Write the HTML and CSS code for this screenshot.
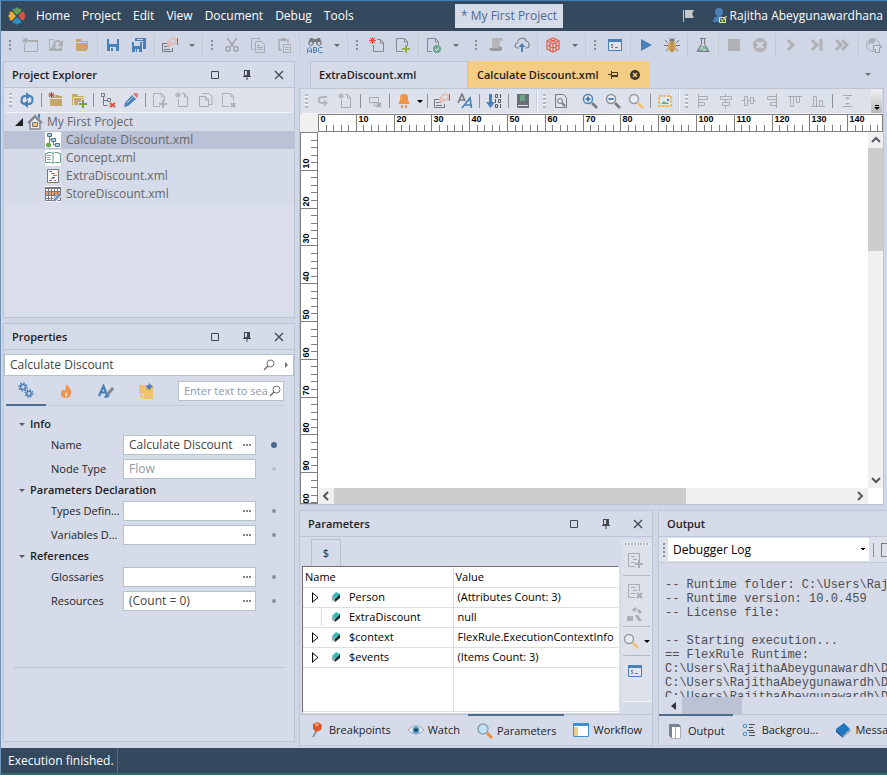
FILE: index.html
```html
<!DOCTYPE html>
<html lang="en">
<head>
    <meta charset="UTF-8">
    <meta name="viewport" content="width=device-width, initial-scale=1.0">
    <title>My First Project</title>
    <link rel="stylesheet" href="styles.css">
</head>
<body>

    <!-- icon set -->
    <svg class="sprite" aria-hidden="true">
        <symbol id="logo" viewBox="0 0 16 16"><path fill="#5fa054" d="M8 7L4.500 4 4 1.500 6.500 1.500 8 0l1.500 1.500 2.500 0-.5 2.500z"/><path fill="#e0503a" d="M9 8l3-3.500 2.500-.5 0 2.500L16 8l-1.500 1.500 0 2.500-2.500-.5z"/><path fill="#2f8fc4" d="M8 9l3.500 3 .5 2.500-2.500 0L8 16l-1.500-1.500-2.500 0 .5-2.500z"/><path fill="#eeb02c" d="M7 8l-3 3.500L1.500 12 1.500 9.500 0 8l1.500-1.500 0-2.500L4 4.500z"/></symbol>
        <symbol id="newwin" viewBox="0 0 16 16"><path fill="none" stroke="#a9abb0" d="M2.500 7v7.500h13v-11H7"/><path fill="#a9abb0" d="M7 3h9v2H7z"/><path stroke="#a9abb0" d="M3.500 0v7M0 3.500h7M1 1l5 5M6 1L1 6"/></symbol>
        <symbol id="openarrow" viewBox="0 0 16 16"><path fill="none" stroke="#adafb4" d="M1.500 13V2.500h4l1 2"/><path fill="#adafb4" d="M1 14l4-6h3l-1 3 2 1 2-1 3-2v5z"/><path fill="none" stroke="#adafb4" stroke-width="2" d="M6 9c0-6 5-6 7-3"/><path fill="#adafb4" d="M15 3v6H9z"/></symbol>
        <symbol id="folder" viewBox="0 0 16 16"><path fill="#c4a56b" d="M2 6h11v8H3l-1-1zM2 2h5l1 2h6v8h-1V5H2z"/></symbol>
        <symbol id="save" viewBox="0 0 16 16"><path fill="#4a80b8" d="M2 2h12v12H2z"/><path fill="#cfd6e6" d="M4 2h8v5H4zM5 10h6v4H5z"/><path fill="#4a80b8" d="M6 11h2v3H6z"/></symbol>
        <symbol id="saveall" viewBox="0 0 16 16"><path fill="#4a80b8" d="M1 5h10v10H1zM4 1h11v11h-3V4H4z"/><path fill="#cfd6e6" d="M3 5h6v4H3zM4 12h4v3H4zM6 2h6v1H6z"/><path fill="#4a80b8" d="M5 12h1v3H5z"/></symbol>
        <symbol id="form" viewBox="0 0 16 16"><path fill="none" stroke="#77797e" d="M.5 6.500h5M.5 6v8.500h10V11M2 9.500h5M2 12.500h6"/><path fill="none" stroke="#e9b9a8" stroke-width="1.500" d="M6 5l4-4 4 1v4l-5 2-3 1V5l4 1"/><path stroke="#77797e" d="M15.500 1v7"/></symbol>
        <symbol id="cut" viewBox="0 0 16 16"><g fill="none" stroke="#a3a6ac" stroke-width="1.500"><path d="M3 1l7 9M13 1l-7 9"/><circle cx="4" cy="12" r="2.200"/><circle cx="12" cy="12" r="2.200"/></g></symbol>
        <symbol id="copy" viewBox="0 0 16 16"><g fill="none" stroke="#a9abb0"><path d="M4.500 12.500h-3v-11h8v2M5.500 4.500h6l3 3v8h-9zM7 8.500h3M7 10.500h6M7 12.500h6"/></g></symbol>
        <symbol id="paste" viewBox="0 0 16 16"><path fill="none" stroke="#b3b5ba" stroke-width="2" d="M6 13H3V3h9v3"/><path fill="#a9abb0" d="M5 1h5v3H5z"/><path fill="none" stroke="#a9abb0" d="M7.500 7.500h7v8h-7zM9 10.500h4M9 12.500h4"/></symbol>
        <symbol id="abc" viewBox="0 0 16 16"><path fill="#77797e" d="M3 1h3v1h4V1h3l2 6H9V5H7v2H1z"/><circle cx="4" cy="6.500" r="2" fill="#cfd6e6" stroke="#77797e"/><circle cx="12" cy="6.500" r="2" fill="#cfd6e6" stroke="#77797e"/><path fill="none" stroke="#4a80b8" d="M.5 16v-4l2-1.500 2 1.500v4M.5 14h4M6.500 10.500v5h2.500q2-1.500 0-2.500 1.500-1 0-2.500zM7 13h2M15.500 10.500h-3l-1 1v3l1 1h3"/></symbol>
        <symbol id="newred" viewBox="0 0 16 16"><path fill="none" stroke="#85878c" d="M4.500 8v6.500h10v-9l-3-3H8M11.500 3v3h3"/><path stroke="#d8513a" d="M3.500 0v7M0 3.500h7M1 1l5 5M6 1L1 6"/></symbol>
        <symbol id="newgrey" viewBox="0 0 16 16"><path fill="none" stroke="#a9abb0" d="M3.500 7v7.500h9v-10l-3-3H7M9.500 2v3h3"/><path stroke="#a9abb0" d="M3 0v6M0 3h6M1 1l4 4M5 1L1 5"/></symbol>
        <symbol id="pageplus" viewBox="0 0 16 16"><path fill="none" stroke="#85878c" d="M8 14.500H1.500v-13h8l3 3V9M9.500 2v3h3"/><path stroke="#8eb540" stroke-width="2" d="M11 8v8M7 12h8"/></symbol>
        <symbol id="pageplusgrey" viewBox="0 0 16 16"><path fill="none" stroke="#aeb0b6" d="M8 14.500H1.500v-13h8l3 3V9M9.500 2v3h3"/><path stroke="#aeb0b6" stroke-width="2" d="M11 8v8M7 12h8"/></symbol>
        <symbol id="pagex" viewBox="0 0 16 16"><path fill="none" stroke="#aeb0b6" d="M8 14.500H1.500v-13h8l3 3V9M9.500 2v3h3"/><path stroke="#aeb0b6" stroke-width="2" d="M10 11l4 4M14 11l-4 4"/></symbol>
        <symbol id="pages" viewBox="0 0 16 16"><path fill="none" stroke="#a9abb0" d="M4 1.500h7l3 3v8h-3M1.500 4.500h6l3 3v7h-9zM7.500 5v3h3"/></symbol>
        <symbol id="pagecheck" viewBox="0 0 16 16"><path fill="none" stroke="#85878c" d="M6 14.500H1.500v-13h8l3 3V8M9.500 2v3h3"/><circle cx="11" cy="12" r="4" fill="#6ca58e"/><path fill="none" stroke="#fff" d="M9 12l1.500 1.500L13 10.500"/></symbol>
        <symbol id="scroll" viewBox="0 0 16 16"><path fill="#b5b6ba" d="M5 1h9l1 3h-3l-1 7H4V3z"/><path fill="#999ba0" d="M1 11h8l1 3H3zM11 9l3 1v3l-3 1H7l3-3z"/></symbol>
        <symbol id="cloud" viewBox="0 0 16 16"><path fill="none" stroke="#85878c" stroke-width="1.200" d="M5 11H3C0 10 1 6 3.500 6 4 0 11 0 12 4c4 1 4 6 1 7h-2"/><path fill="#4a80b8" d="M8 6l3.500 4H9v5H7v-5H4.500z"/></symbol>
        <symbol id="cube" viewBox="0 0 16 16"><path fill="none" stroke="#e0654c" stroke-width="1.300" d="M8 1l6 3v8l-6 3-6-3V4zM2 4l6 3 6-3M8 7v8M2 8l6 3 6-3M5 2.500l6 3v8M11 2.500l-6 3v8"/></symbol>
        <symbol id="console" viewBox="0 0 16 16"><path fill="#dfe4ee" stroke="#4a80b8" d="M1.500 2.500h13v11h-13z"/><path fill="#4a80b8" d="M1 2h14v3H1z"/><path fill="none" stroke="#77797e" d="M6 7.500H4.500L4 8l2 1.500-.5 1H4M8 10.500h3"/></symbol>
        <symbol id="play" viewBox="0 0 16 16"><path fill="#4a80b8" d="M3 2l11 6-11 6z"/></symbol>
        <symbol id="bug" viewBox="0 0 16 16"><path stroke="#77797e" d="M1 3l3 3M15 3l-3 3M0 8.500h16M2 14l3-3M14 14l-3-3M5 1l2 2M11 1L9 3"/><circle cx="8" cy="4" r="2.500" fill="#77797e"/><ellipse cx="8" cy="9.500" rx="4" ry="5.500" fill="#d0a458"/><path stroke="#8f7443" d="M8 5v10"/></symbol>
        <symbol id="flask" viewBox="0 0 16 16"><path fill="#84b3a0" d="M5 9h6l3 5H2z"/><path fill="none" stroke="#77797e" d="M5 1.500h6M6.500 2v5l-4.500 7.500h12L9.500 7V2"/><path stroke="#dfe4ee" d="M5 11h3M8 13h3"/></symbol>
        <symbol id="stop" viewBox="0 0 16 16"><path fill="#b0b1b5" d="M2 2h12v12H2z"/></symbol>
        <symbol id="cancel" viewBox="0 0 16 16"><circle cx="8" cy="8" r="7" fill="#b0b1b5"/><path stroke="#d6dbe9" stroke-width="2" d="M5 5l6 6M11 5l-6 6"/></symbol>
        <symbol id="step" viewBox="0 0 16 16"><path fill="none" stroke="#b0b1b5" stroke-width="3" d="M5 3l5 5-5 5"/></symbol>
        <symbol id="stepend" viewBox="0 0 16 16"><path fill="none" stroke="#b0b1b5" stroke-width="3" d="M3 3l5 5-5 5M12 2v12"/></symbol>
        <symbol id="fast" viewBox="0 0 16 16"><path fill="none" stroke="#b0b1b5" stroke-width="3" d="M1 3l5 5-5 5M7 3l5 5-5 5"/></symbol>
        <symbol id="globe" viewBox="0 0 16 16"><circle cx="7" cy="8" r="6.500" fill="none" stroke="#a9abb0"/><path fill="#b0b1b5" d="M3 3l4-2 3 2-3 4-2-1-3 2z"/><path fill="#d6dbe9" stroke="#999ba0" d="M7.500 8.500h8v2h-2v5h-4v-3h-2z"/></symbol>
        <symbol id="refresh" viewBox="0 0 16 16"><path fill="none" stroke="#4a80b8" stroke-width="2" d="M5 12C1 11 2 4 6 4h3M11 4c4 1 3 8-1 8H7"/><path fill="#4a80b8" d="M7 0v8l5-4zM9 8v8l-5-4z"/></symbol>
        <symbol id="foldernew" viewBox="0 0 16 16"><path fill="#c4a56b" d="M2 7h12v7H3l-1-1zM7 3h4v1h3v2H3v-1h4z"/><path stroke="#b3412e" d="M3.500 0v6M.5 3h6M1 1l5 4M6 1L1 5"/></symbol>
        <symbol id="folderplus" viewBox="0 0 16 16"><path fill="#c4a56b" d="M3 6h10v7H3zM1 2h5l1 2h6v1H2v8H1z"/><path stroke="#dde1ec" stroke-width="4" d="M12 7v9M7 12h9"/><path stroke="#7d9c3a" stroke-width="2" d="M12 8v8M8 12h8"/></symbol>
        <symbol id="treex" viewBox="0 0 16 16"><path fill="none" stroke="#77797e" d="M1.500 1.500h3v3h-3zM3.500 5v8.500h4M4 8.500h3M7.500 6.500h3v3h-3z"/><path stroke="#d8513a" stroke-width="2" d="M10 11l5 4M15 11l-5 4"/></symbol>
        <symbol id="pencil" viewBox="0 0 16 16"><path fill="#4a80b8" d="M9 3l4 4-8 7-4 1 1-4z"/><path fill="#dc7a86" d="M10 2l1-1h3l1 1v3l-1 1z"/><path stroke="#b9d0e6" d="M4 11l7-7"/></symbol>
        <symbol id="undo" viewBox="0 0 16 16"><path fill="none" stroke="#b3b5ba" stroke-width="2" d="M12 4H7c-5 1-4 6 0 6h3"/><path fill="#b3b5ba" d="M9 6l4 4-4 4z"/></symbol>
        <symbol id="boxx" viewBox="0 0 16 16"><path fill="none" stroke="#a9abb0" d="M2.500 4.500h9v5h-9zM7 10v3h3"/><path stroke="#a9abb0" stroke-width="2" d="M10 10l4 4M14 10l-4 4"/></symbol>
        <symbol id="led" viewBox="0 0 16 16"><path fill="#ec9448" d="M4 8V4q0-3 4-3t4 3v4h1v3H3V8zM5 12h2v3H5zM9 12h2v3H9z"/><path stroke="#f6c99c" d="M5.500 7V4"/></symbol>
        <symbol id="fonts" viewBox="0 0 16 16"><path fill="none" stroke="#77797e" stroke-width="1.700" d="M1 10L5 1l3 7M2.500 7H7"/><path fill="none" stroke="#4a80b8" stroke-width="1.700" d="M5 15l8-10 1.500 10M8 12h6"/></symbol>
        <symbol id="sort" viewBox="0 0 16 16"><path fill="#4a80b8" d="M3 1h3v8h3l-4.500 6L0 9h3z"/><path fill="none" stroke="#55585e" d="M9.500 1.500h2v3h-2zM14.500 1v4M9.500 6v4M12.500 6.500h2v3h-2zM9.500 11.500h2v3h-2zM14.500 11v4"/></symbol>
        <symbol id="book" viewBox="0 0 16 16"><path fill="#6b6e73" d="M2 1h12v14H3l-1-1z"/><path fill="#6ca58e" d="M5 2h5v7L7.500 7 5 9z"/><path stroke="#dde1ec" d="M3 12.500h10"/></symbol>
        <symbol id="preview" viewBox="0 0 16 16"><path fill="none" stroke="#77797e" d="M2.500 1.500h8l3 3v10h-11z"/><circle cx="7" cy="8" r="2.500" fill="none" stroke="#77797e"/><path stroke="#77797e" stroke-width="2" d="M9 10l3 3"/></symbol>
        <symbol id="zoomin" viewBox="0 0 16 16"><circle cx="6" cy="6" r="4.500" fill="#e8edf5" stroke="#4a80b8" stroke-width="1.500"/><path stroke="#77797e" stroke-width="2.500" d="M10 10l5 5"/><path stroke="#4a80b8" stroke-width="2" d="M3.500 6h5M6 3.500v5"/></symbol>
        <symbol id="zoomout" viewBox="0 0 16 16"><circle cx="6" cy="6" r="4.500" fill="#e8edf5" stroke="#8a9099" stroke-width="1.500"/><path stroke="#77797e" stroke-width="2.500" d="M10 10l5 5"/><path stroke="#4a80b8" stroke-width="2" d="M3.500 6h5"/></symbol>
        <symbol id="zoomfit" viewBox="0 0 16 16"><circle cx="6" cy="6" r="4.500" fill="#e8ebf2" stroke="#999ba0" stroke-width="1.500"/><path stroke="#efc272" stroke-width="3" d="M10 10l5 5"/></symbol>
        <symbol id="image" viewBox="0 0 16 16"><path fill="#dfe9ee" stroke="#efbb62" stroke-width="2" stroke-dasharray="3 1" d="M2 3h12v10H2z"/><path fill="#6ca58e" d="M4 11l3-3 2 2 1-1 2 2z"/><path fill="#4a80b8" d="M10 6h2v2h-2z"/></symbol>
        <symbol id="alignl" viewBox="0 0 16 16"><path fill="none" stroke="#a9abb0" d="M3.500 1v14M4 3.500h8.500v3H4M4 9.500h5.500v3H4"/></symbol>
        <symbol id="alignc" viewBox="0 0 16 16"><path fill="none" stroke="#a9abb0" d="M7.500 1v2M7.500 7v3M7.500 13v3M2.500 3.500h11v3h-11zM4.500 9.500h7v3h-7z"/></symbol>
        <symbol id="alignm" viewBox="0 0 16 16"><path fill="none" stroke="#a9abb0" d="M1 7.500h2M7 7.500h3M13 7.500h2M3.500 3.500h3v9h-3zM9.500 4.500h3v6h-3z"/></symbol>
        <symbol id="alignr" viewBox="0 0 16 16"><path fill="none" stroke="#a9abb0" d="M12.500 1v14M12 3.500H3.500v3H12M12 9.500H6.500v3H12"/></symbol>
        <symbol id="alignt" viewBox="0 0 16 16"><path fill="none" stroke="#a9abb0" d="M1 3.500h14M3.500 4v9.500h3V4M9.500 4v5.500h3V4"/></symbol>
        <symbol id="alignb" viewBox="0 0 16 16"><path fill="none" stroke="#a9abb0" d="M1 13.500h14M3.500 13V3.500h3V13M9.500 13V7.500h3V13"/></symbol>
        <symbol id="spacev" viewBox="0 0 16 16"><path fill="none" stroke="#a9abb0" d="M4 2.500h9M4 13.500h9"/><path fill="#a9abb0" d="M6 6h5L8.500 4zM6 10h5l-2.500 2z"/></symbol>
        <symbol id="home" viewBox="0 0 16 16"><path fill="#4a80b8" d="M11 0h2v5l-2-2z"/><path fill="#e6e9f0" stroke="#85878c" stroke-width="1.500" d="M3 8v7h10V8L8 3z"/><path fill="none" stroke="#85878c" stroke-width="2" d="M1 9l7-7 7 7"/><path fill="#f2c268" stroke="#77797e" d="M5.500 8.500h5v4h-5z"/></symbol>
        <symbol id="flow" viewBox="0 0 16 16"><path fill="#fff" d="M0 0h16v16H0z"/><path fill="none" stroke="#77797e" d="M4.500 3v10M5 7.500h4M8.500 9v4h3"/><path fill="#9fd2ee" stroke="#5d7488" d="M2.500 1.500h4v3h-4zM6.500 6.500h4v3h-4zM10.500 11.500h4v3h-4z"/><circle cx="3.500" cy="13" r="2.500" fill="#6aa84f"/></symbol>
        <symbol id="concept" viewBox="0 0 16 16"><path fill="#fff" d="M0 0h16v16H0z"/><path fill="none" stroke="#6ca58e" d="M.5 3.500h2v-1h4l1.500 1 1.500-1h4v1h2v9h-6l-1.500 1-1.500-1h-6zM8 3v10"/><path stroke="#9a9ca0" d="M2 5.500h4M2 7.500h3M2 9.500h4"/></symbol>
        <symbol id="rule" viewBox="0 0 16 16"><path fill="#fff" stroke="#77797e" d="M2.500 1.500h11v13h-11z"/><path stroke="#4a6fd0" d="M4 3.500h3M7 9.500h3M4 12.500h3"/><path stroke="#e06a5a" d="M6 5.500h4M8 7.500h4M6 10.500h3M9 12.500h2"/></symbol>
        <symbol id="table" viewBox="0 0 16 16"><path fill="#fff" d="M0 0h16v16H0z"/><path fill="#77797e" d="M0 1h16v2H0z"/><path fill="#ec9b62" d="M0 6h16v3H0z"/><path fill="none" stroke="#77797e" d="M.5 1v13.500h15V1M3.500 3v12M6.500 3v12M9.500 3v12M12.500 3v12M0 5.500h16M0 9.500h16M0 12.500h16"/><path stroke="#fff" stroke-width="4" d="M9 15l6-6"/><path stroke="#5f86b5" stroke-width="2.500" d="M9 15l6-7"/></symbol>
        <symbol id="gears" viewBox="0 0 16 16"><g fill="none" stroke="#4a80b8"><circle cx="5" cy="5" r="2.500" stroke-width="1.500"/><circle cx="5" cy="5" r="4" stroke-width="1.500" stroke-dasharray="1.600 1.500"/><circle cx="11" cy="11.500" r="2.200" stroke-width="1.500"/><circle cx="11" cy="11.500" r="3.700" stroke-width="1.500" stroke-dasharray="1.500 1.400"/></g></symbol>
        <symbol id="flame" viewBox="0 0 16 16"><path fill="#ee9450" d="M8 1c4 4 6 6 5 10-1 3-3 4-5 4s-5-1-5-4c0-2 1-4 2-5l1 2c2-2 2-4 2-7z"/><path fill="#f7d9c3" d="M8 9c2 2 2 4 0 5-2-1-1-3 0-5z"/></symbol>
        <symbol id="style" viewBox="0 0 16 16"><path fill="none" stroke="#4a80b8" stroke-width="2.200" d="M1 13L5.500 3 9 12M3 9.500h5"/><path stroke="#85878c" stroke-width="3" d="M10 11l5-6"/><path fill="#4a80b8" d="M6 15q1-4 4-4l2 2q-2 2-6 2z"/></symbol>
        <symbol id="note" viewBox="0 0 16 16"><path fill="#eec272" d="M1 2h14v14H6v-5H1zM1 12h4v4z"/><path fill="#4a80b8" d="M11 0l4 4-2 .5-1.500 3-1.500-2L7 8l2.500-3-2-1.500 3-1.500z"/></symbol>
        <symbol id="search" viewBox="0 0 16 16"><circle cx="9.500" cy="6.500" r="3.500" fill="none" stroke="#6a6c70"/><path stroke="#6a6c70" stroke-width="1.500" d="M7 9l-4 4"/></symbol>
        <symbol id="max" viewBox="0 0 16 16"><path fill="none" stroke="#44474d" d="M4.500 4.500h7v7h-7z"/></symbol>
        <symbol id="pin" viewBox="0 0 16 16"><path fill="#44474d" d="M5 3h6v6H5zM4 9h8v1H4zM7.500 10h1v3h-1z"/><path fill="#d6dbe9" d="M6 4h2v4H6z"/></symbol>
        <symbol id="close" viewBox="0 0 16 16"><path stroke="#44474d" stroke-width="1.300" d="M4 4l8 8M12 4l-8 8"/></symbol>
        <symbol id="pinside" viewBox="0 0 16 16"><path fill="none" stroke="#3f3727" d="M3 7.500h3M6.500 4v8M7 5.500h5.500v4H7"/><path fill="#3f3727" d="M7 8h6v2H7z"/></symbol>
        <symbol id="closetab" viewBox="0 0 16 16"><circle cx="8" cy="8" r="5" fill="#3f3727"/><path stroke="#f5cc84" stroke-width="1.500" d="M6 6l4 4M10 6l-4 4"/></symbol>
        <symbol id="flag" viewBox="0 0 16 16"><path fill="#c3c7cd" d="M2 2h1v12H2zM4 2h9l-2 4 2 4H4z"/></symbol>
        <symbol id="user" viewBox="0 0 16 16"><circle cx="7" cy="4" r="4" fill="#4a80b8"/><path fill="#4a80b8" d="M1 14q0-6 6-6t6 6z"/><path fill="#34495e" stroke="#dfe8c8" d="M7.500 9.500h6v5h-6z"/><path fill="none" stroke="#b8cf3a" stroke-width="1.500" d="M8.500 11l2 2 4-5"/></symbol>
        <symbol id="gem" viewBox="0 0 12 12"><path fill="#35bdb5" d="M2 5l4-4 4 2-5 5z"/><path fill="#8fa3a8" d="M2 5l3 3v3L2 9z"/><path fill="#1b2b2d" d="M5 8l5-5v4l-5 4z"/></symbol>
        <symbol id="bpin" viewBox="0 0 16 16"><path stroke="#77797e" stroke-width="1.500" d="M8 8l-4 7"/><path fill="#de5427" d="M4 2l5-2 4 3-1 5-5 2-3-3z"/><path fill="#f6a37c" d="M6 2l3-1 1 2-3 2z"/></symbol>
        <symbol id="eye" viewBox="0 0 16 16"><path fill="#eef2f6" stroke="#9aa3ac" d="M0 8q8-9 16 0-8 8-16 0z"/><circle cx="8" cy="8" r="3.500" fill="#4e9cc9"/><circle cx="8" cy="8" r="1.700" fill="#1c3a50"/></symbol>
        <symbol id="lens" viewBox="0 0 16 16"><circle cx="6" cy="6" r="5" fill="#bfe2f5" stroke="#8fa0b0" stroke-width="1.500"/><path stroke="#e79043" stroke-width="3" d="M10 10l5 5"/></symbol>
        <symbol id="wf" viewBox="0 0 16 16"><path fill="#fff" stroke="#3b8fd4" d="M.5 1.500h15v13H.5z"/><path fill="#3b8fd4" d="M0 1h16v3H0z"/><path fill="#e8cf88" d="M1 5h4v9H1z"/></symbol>
        <symbol id="outlog" viewBox="0 0 16 16"><path fill="#fff" stroke="#a9b1bd" d="M3.500 3.500h9v12h-9z"/><path fill="#7b8391" d="M1 1h10l2 3H4v11l-3-2z"/><path stroke="#e79a8a" d="M7.500 4v11"/></symbol>
        <symbol id="bglist" viewBox="0 0 16 16"><circle cx="3" cy="4" r="1.800" fill="none" stroke="#3b8fd4"/><circle cx="3" cy="12" r="1.800" fill="none" stroke="#3b8fd4"/><path stroke="#4a4d52" d="M7 2.500h6M7 5.500h4M5 8.500h7M7 10.500h6M7 13.500h6"/></symbol>
        <symbol id="msg" viewBox="0 0 16 16"><path fill="#1f78c2" d="M1 7l8-6 6 6-7 7z"/><path fill="#155a97" d="M1 7l7 7v2L1 10z"/><path fill="#e8eef4" stroke="#7f93a6" d="M8 14l7-6v1l-7 6z"/></symbol>
        <symbol id="lineplus" viewBox="0 0 16 16"><path fill="none" stroke="#a9abb0" d="M8 14.500H1.500v-13h11V8M4 4.500h4M6 7.500h4M4 10.500h4"/><path stroke="#a9abb0" stroke-width="2" d="M12 8v8M8 12h8"/></symbol>
        <symbol id="linex" viewBox="0 0 16 16"><path fill="none" stroke="#a9abb0" d="M8 14.500H1.500v-13h11V8M4 4.500h4M6 7.500h4M4 10.500h4"/><path stroke="#a9abb0" stroke-width="2" d="M10 10l5 5M15 10l-5 5"/></symbol>
        <symbol id="erase" viewBox="0 0 16 16"><path fill="#adafb4" d="M0 10h6v5H0zM8 9l3 6h4l-4-6zM5 4l3-3 2 2-3 3zM10 5l2-2 3 3-2 2z"/></symbol>
    </svg>

    <header class="titlebar">
        <nav class="menu">
            <svg class="logo"><use href="#logo"/></svg>
            <a href="#">Home</a>
            <a href="#">Project</a>
            <a href="#">Edit</a>
            <a href="#">View</a>
            <a href="#">Document</a>
            <a href="#">Debug</a>
            <a href="#">Tools</a>
        </nav>
        <div class="doc-name">* My First Project</div>
        <div class="account">
            <svg class="icon"><use href="#flag"/></svg>
            <svg class="icon user"><use href="#user"/></svg>
            <span>Rajitha Abeygunawardhana</span>
        </div>
    </header>

    <div class="toolbar main">
        <i class="grip"></i>
        <button aria-label="New"><svg class="icon"><use href="#newwin"/></svg></button>
        <button aria-label="Import"><svg class="icon"><use href="#openarrow"/></svg></button>
        <button aria-label="Open"><svg class="icon"><use href="#folder"/></svg></button>
        <i class="sep"></i>
        <button aria-label="Save"><svg class="icon"><use href="#save"/></svg></button>
        <button aria-label="Save all"><svg class="icon"><use href="#saveall"/></svg></button>
        <i class="sep"></i>
        <button aria-label="Form"><svg class="icon"><use href="#form"/></svg></button>
        <button class="drop" aria-label="More forms"></button>
        <i class="sep"></i>
        <i class="grip"></i>
        <button aria-label="Cut"><svg class="icon"><use href="#cut"/></svg></button>
        <button aria-label="Copy"><svg class="icon"><use href="#copy"/></svg></button>
        <button aria-label="Paste"><svg class="icon"><use href="#paste"/></svg></button>
        <i class="sep"></i>
        <button aria-label="Find"><svg class="icon"><use href="#abc"/></svg></button>
        <button class="drop" aria-label="More find"></button>
        <i class="sep"></i>
        <i class="grip"></i>
        <button aria-label="New file"><svg class="icon"><use href="#newred"/></svg></button>
        <button aria-label="Add file"><svg class="icon"><use href="#pageplus"/></svg></button>
        <i class="sep"></i>
        <button aria-label="Validate"><svg class="icon"><use href="#pagecheck"/></svg></button>
        <button class="drop" aria-label="More validate"></button>
        <i class="sep blank"></i>
        <i class="grip"></i>
        <button aria-label="Script"><svg class="icon"><use href="#scroll"/></svg></button>
        <button aria-label="Publish"><svg class="icon"><use href="#cloud"/></svg></button>
        <i class="sep"></i>
        <button aria-label="Package"><svg class="icon"><use href="#cube"/></svg></button>
        <button class="drop" aria-label="More package"></button>
        <i class="sep"></i>
        <i class="grip"></i>
        <button aria-label="Console"><svg class="icon"><use href="#console"/></svg></button>
        <i class="sep"></i>
        <button aria-label="Run"><svg class="icon"><use href="#play"/></svg></button>
        <button aria-label="Debug"><svg class="icon"><use href="#bug"/></svg></button>
        <i class="sep"></i>
        <button aria-label="Test"><svg class="icon"><use href="#flask"/></svg></button>
        <i class="sep"></i>
        <button aria-label="Stop"><svg class="icon"><use href="#stop"/></svg></button>
        <button aria-label="Cancel"><svg class="icon"><use href="#cancel"/></svg></button>
        <i class="sep"></i>
        <button aria-label="Step"><svg class="icon"><use href="#step"/></svg></button>
        <button aria-label="Step to end"><svg class="icon"><use href="#stepend"/></svg></button>
        <button aria-label="Continue"><svg class="icon"><use href="#fast"/></svg></button>
        <i class="sep"></i>
        <button aria-label="Web"><svg class="icon"><use href="#globe"/></svg></button>
    </div>

    <main class="workspace">
        <div class="left">
            <section class="panel explorer">
                <div class="panel-head">
                    <h2>Project Explorer</h2>
                    <button aria-label="Maximize"><svg class="icon"><use href="#max"/></svg></button>
                    <button aria-label="Pin"><svg class="icon"><use href="#pin"/></svg></button>
                    <button aria-label="Close"><svg class="icon"><use href="#close"/></svg></button>
                </div>
                <div class="toolbar small">
                    <i class="grip"></i>
                    <button aria-label="Refresh"><svg class="icon"><use href="#refresh"/></svg></button>
                    <i class="sep"></i>
                    <button aria-label="New folder"><svg class="icon"><use href="#foldernew"/></svg></button>
                    <button aria-label="Add folder"><svg class="icon"><use href="#folderplus"/></svg></button>
                    <i class="sep"></i>
                    <button aria-label="Remove"><svg class="icon"><use href="#treex"/></svg></button>
                    <button aria-label="Rename"><svg class="icon"><use href="#pencil"/></svg></button>
                    <i class="sep"></i>
                    <button aria-label="Add page"><svg class="icon"><use href="#pageplusgrey"/></svg></button>
                    <button aria-label="New page"><svg class="icon"><use href="#newgrey"/></svg></button>
                    <button aria-label="Copy page"><svg class="icon"><use href="#pages"/></svg></button>
                    <button aria-label="Delete page"><svg class="icon"><use href="#pagex"/></svg></button>
                </div>
                <ul class="tree">
                    <li class="root"><i class="caret"></i><svg class="icon"><use href="#home"/></svg>My First Project</li>
                    <li class="selected"><svg class="icon"><use href="#flow"/></svg>Calculate Discount.xml</li>
                    <li><svg class="icon"><use href="#concept"/></svg>Concept.xml</li>
                    <li><svg class="icon"><use href="#rule"/></svg>ExtraDiscount.xml</li>
                    <li><svg class="icon"><use href="#table"/></svg>StoreDiscount.xml</li>
                </ul>
            </section>

            <section class="panel properties">
                <div class="panel-head">
                    <h2>Properties</h2>
                    <button aria-label="Maximize"><svg class="icon"><use href="#max"/></svg></button>
                    <button aria-label="Pin"><svg class="icon"><use href="#pin"/></svg></button>
                    <button aria-label="Close"><svg class="icon"><use href="#close"/></svg></button>
                </div>
                <div class="object-box">
                    <input type="text" value="Calculate Discount" aria-label="Selected object">
                    <svg class="icon"><use href="#search"/></svg>
                    <i class="right-arrow"></i>
                </div>
                <div class="prop-tabs">
                    <button class="active" aria-label="General"><svg class="icon"><use href="#gears"/></svg></button>
                    <button aria-label="Events"><svg class="icon"><use href="#flame"/></svg></button>
                    <button aria-label="Style"><svg class="icon"><use href="#style"/></svg></button>
                    <button aria-label="Notes"><svg class="icon"><use href="#note"/></svg></button>
                    <div class="prop-search">
                        <input type="text" placeholder="Enter text to search" aria-label="Search properties">
                        <svg class="icon"><use href="#search"/></svg>
                    </div>
                </div>
                <div class="prop-list">
                    <h3>Info</h3>
                    <div class="prop set">
                        <label for="name">Name</label>
                        <div class="field"><input type="text" id="name" value="Calculate Discount"><button aria-label="Edit name"></button></div>
                    </div>
                    <div class="prop readonly">
                        <label for="nodeType">Node Type</label>
                        <div class="field"><input type="text" id="nodeType" value="Flow" readonly></div>
                    </div>
                    <h3>Parameters Declaration</h3>
                    <div class="prop">
                        <label for="types">Types Defin...</label>
                        <div class="field"><input type="text" id="types"><button aria-label="Edit types"></button></div>
                    </div>
                    <div class="prop">
                        <label for="variables">Variables D...</label>
                        <div class="field"><input type="text" id="variables"><button aria-label="Edit variables"></button></div>
                    </div>
                    <h3>References</h3>
                    <div class="prop">
                        <label for="glossaries">Glossaries</label>
                        <div class="field"><input type="text" id="glossaries"><button aria-label="Edit glossaries"></button></div>
                    </div>
                    <div class="prop">
                        <label for="resources">Resources</label>
                        <div class="field"><input type="text" id="resources" value="(Count = 0)"><button aria-label="Edit resources"></button></div>
                    </div>
                </div>
                <div class="prop-help"></div>
            </section>
        </div>

        <div class="right">
            <section class="editor">
                <div class="doc-tabs">
                    <button class="doc-tab">ExtraDiscount.xml</button>
                    <button class="doc-tab active">Calculate Discount.xml
                        <svg class="icon"><use href="#pinside"/></svg>
                        <svg class="icon"><use href="#closetab"/></svg>
                    </button>
                    <button class="drop" aria-label="Open documents"></button>
                </div>
                <div class="canvas-frame">
                    <div class="toolbar small">
                        <i class="grip"></i>
                        <button aria-label="Undo"><svg class="icon"><use href="#undo"/></svg></button>
                        <button aria-label="New item"><svg class="icon"><use href="#newgrey"/></svg></button>
                        <i class="sep"></i>
                        <button aria-label="Delete item"><svg class="icon"><use href="#boxx"/></svg></button>
                        <i class="sep"></i>
                        <button aria-label="Breakpoint"><svg class="icon"><use href="#led"/></svg></button>
                        <button class="drop" aria-label="Breakpoint options"></button>
                        <i class="sep"></i>
                        <button aria-label="Form"><svg class="icon"><use href="#form"/></svg></button>
                        <button aria-label="Fonts"><svg class="icon"><use href="#fonts"/></svg></button>
                        <i class="sep"></i>
                        <button aria-label="Sort"><svg class="icon"><use href="#sort"/></svg></button>
                        <i class="sep"></i>
                        <button aria-label="Bookmark"><svg class="icon"><use href="#book"/></svg></button>
                        <i class="group-end"></i>
                        <i class="grip"></i>
                        <button aria-label="Preview"><svg class="icon"><use href="#preview"/></svg></button>
                        <i class="sep blank"></i>
                        <button aria-label="Zoom in"><svg class="icon"><use href="#zoomin"/></svg></button>
                        <button aria-label="Zoom out"><svg class="icon"><use href="#zoomout"/></svg></button>
                        <button aria-label="Zoom to fit"><svg class="icon"><use href="#zoomfit"/></svg></button>
                        <i class="sep"></i>
                        <button aria-label="Image"><svg class="icon"><use href="#image"/></svg></button>
                        <i class="group-end"></i>
                        <i class="grip"></i>
                        <button aria-label="Align left"><svg class="icon"><use href="#alignl"/></svg></button>
                        <button aria-label="Align center"><svg class="icon"><use href="#alignc"/></svg></button>
                        <button aria-label="Align middle"><svg class="icon"><use href="#alignm"/></svg></button>
                        <button aria-label="Align right"><svg class="icon"><use href="#alignr"/></svg></button>
                        <button aria-label="Align top"><svg class="icon"><use href="#alignt"/></svg></button>
                        <button aria-label="Align bottom"><svg class="icon"><use href="#alignb"/></svg></button>
                        <i class="sep"></i>
                        <button aria-label="Space vertically"><svg class="icon"><use href="#spacev"/></svg></button>
                        <button class="overflow" aria-label="Toolbar options"></button>
                    </div>
                    <div class="canvas">
                        <div class="corner"></div>
                        <svg class="ruler-x" id="rulerX"></svg>
                        <svg class="ruler-y" id="rulerY"></svg>
                        <div class="sheet"></div>
                        <div class="vscroll">
                            <svg class="arrow" viewBox="0 0 16 16"><path d="M4 10l4-4 4 4"/></svg>
                            <i class="thumb"></i>
                            <svg class="arrow" viewBox="0 0 16 16"><path d="M4 6l4 4 4-4"/></svg>
                        </div>
                        <div class="hscroll">
                            <svg class="arrow" viewBox="0 0 16 16"><path d="M10 4L6 8l4 4"/></svg>
                            <i class="thumb"></i>
                            <svg class="arrow" viewBox="0 0 16 16"><path d="M6 4l4 4-4 4"/></svg>
                        </div>
                    </div>
                </div>
            </section>

            <div class="bottom">
                <section class="panel parameters">
                    <div class="panel-head">
                        <h2>Parameters</h2>
                        <button aria-label="Maximize"><svg class="icon"><use href="#max"/></svg></button>
                        <button aria-label="Pin"><svg class="icon"><use href="#pin"/></svg></button>
                        <button aria-label="Close"><svg class="icon"><use href="#close"/></svg></button>
                    </div>
                    <div class="param-body">
                        <div class="param-left">
                            <button class="dollar">$</button>
                            <div class="grid-box">
                                <table>
                                    <thead>
                                        <tr><th>Name</th><th>Value</th></tr>
                                    </thead>
                                    <tbody>
                                        <tr><td><div class="cell"><i class="expand"></i><svg class="gem"><use href="#gem"/></svg>Person</div></td><td>(Attributes Count: 3)</td></tr>
                                        <tr><td><div class="cell"><i class="expand none"></i><svg class="gem"><use href="#gem"/></svg>ExtraDiscount</div></td><td>null</td></tr>
                                        <tr><td><div class="cell"><i class="expand"></i><svg class="gem"><use href="#gem"/></svg>$context</div></td><td>FlexRule.ExecutionContextInfo</td></tr>
                                        <tr><td><div class="cell"><i class="expand"></i><svg class="gem"><use href="#gem"/></svg>$events</div></td><td>(Items Count: 3)</td></tr>
                                        <tr class="filler"><td></td><td></td></tr>
                                    </tbody>
                                </table>
                            </div>
                        </div>
                        <div class="side-tools">
                            <i class="grip-h"></i>
                            <button aria-label="Add"><svg class="icon"><use href="#lineplus"/></svg></button>
                            <hr>
                            <button aria-label="Remove"><svg class="icon"><use href="#linex"/></svg></button>
                            <button class="tight" aria-label="Clear"><svg class="icon"><use href="#erase"/></svg></button>
                            <hr>
                            <button class="with-drop" aria-label="Search"><svg class="icon"><use href="#zoomfit"/></svg></button>
                            <hr>
                            <button aria-label="Console"><svg class="icon"><use href="#console"/></svg></button>
                        </div>
                    </div>
                    <div class="dock-tabs">
                        <button><svg class="icon"><use href="#bpin"/></svg>Breakpoints</button>
                        <button><svg class="icon"><use href="#eye"/></svg>Watch</button>
                        <button class="active"><svg class="icon"><use href="#lens"/></svg>Parameters</button>
                        <button><svg class="icon"><use href="#wf"/></svg>Workflow</button>
                    </div>
                </section>

                <section class="panel output">
                    <div class="panel-head">
                        <h2>Output</h2>
                    </div>
                    <div class="output-tools">
                        <i class="grip"></i>
                        <select aria-label="Log source"><option>Debugger Log</option></select>
                        <i class="sep"></i>
                        <button aria-label="Clear log"></button>
                    </div>
                    <pre class="log">

-- Runtime folder: C:\Users\RajithaAbeygunawardh
-- Runtime version: 10.0.459
-- License file:

-- Starting execution...
== FlexRule Runtime:
C:\Users\RajithaAbeygunawardh\Documents
C:\Users\RajithaAbeygunawardh\Documents
C:\Users\RajithaAbeygunawardh\Documents</pre>
                    <div class="log-scroll"><i class="left-arrow"></i><i class="thumb"></i></div>
                    <div class="dock-tabs">
                        <button class="active"><svg class="icon"><use href="#outlog"/></svg>Output</button>
                        <button><svg class="icon"><use href="#bglist"/></svg>Backgrou...</button>
                        <button><svg class="icon"><use href="#msg"/></svg>Messages</button>
                    </div>
                </section>
            </div>
        </div>
    </main>

    <footer class="statusbar"><span>Execution finished.</span></footer>

    <script src="script.js"></script>
</body>
</html>
```

FILE: styles.css
```css
* {
    box-sizing: border-box;
}
body {
    margin: 0;
    height: 100vh;
    display: flex;
    flex-direction: column;
    overflow: hidden;
    border-top: 1px solid #3d7fb8;
    border-left: 1px solid #6f93b5;
    border-bottom: 2px solid #3a666d;
    background-color: #cfd6e6;
    font-family: "Open Sans", "Noto Sans", sans-serif;
    font-size: 12px;
    line-height: 18px;
    color: #1e1e1e;
}
button, input, select {
    font: inherit;
    color: inherit;
    margin: 0;
    padding: 0;
    border: none;
    background: none;
}
h2, h3, ul, pre, hr {
    margin: 0;
    padding: 0;
}
.sprite {
    position: absolute;
    width: 0;
    height: 0;
}
.icon {
    width: 16px;
    height: 16px;
    flex: none;
    display: block;
}

/* title bar */
.titlebar {
    flex: none;
    height: 30px;
    display: grid;
    grid-template-columns: 454px auto 1fr;
    align-items: center;
    background-color: #34495e;
    color: #fff;
}
.menu {
    display: flex;
    align-items: center;
    gap: 12px;
    padding-left: 7px;
}
.menu a {
    color: #fff;
    text-decoration: none;
}
.logo {
    width: 18px;
    height: 18px;
    margin-right: -2px;
}
.doc-name {
    padding: 3px 6px;
    background-color: #d6dbe9;
    color: #4f6990;
}
.account {
    display: flex;
    align-items: center;
    justify-content: flex-end;
    padding-right: 4px;
    white-space: nowrap;
}
.account .user {
    margin: 0 2px 0 15px;
}

/* toolbars */
.toolbar {
    flex: none;
    display: flex;
    align-items: center;
    overflow: hidden;
}
.toolbar button {
    flex: none;
    display: flex;
    justify-content: center;
    align-items: center;
}
.toolbar.main {
    height: 28px;
    margin-bottom: 2px;
    padding-left: 2px;
}
.main button {
    width: 26px;
    height: 24px;
}
.main .drop {
    width: 17px;
}
.drop::after {
    content: "";
    border: 3px solid transparent;
    border-top-color: #6a6c70;
    border-bottom: none;
}
.grip {
    flex: none;
    width: 14px;
    height: 10px;
    background: repeating-linear-gradient(#8a8d94 0 2px, transparent 2px 4px) center / 2px 100% no-repeat;
}
.sep {
    flex: none;
    width: 5px;
    height: 24px;
    background: linear-gradient(#c0cbd4, #c0cbd4) center / 1px 100% no-repeat;
}
.sep.blank {
    background: none;
}
.toolbar.small {
    height: 25px;
    margin: 0 1px;
    border-bottom: 1px solid #f2f4f8;
    border-radius: 3px;
    background-color: #dde1ec;
}
.small button {
    width: 23px;
    height: 24px;
}
.small .drop {
    width: 9px;
}
.small .drop::after {
    border-top-color: #000;
}
.small .grip {
    width: 10px;
    height: 14px;
    background: repeating-linear-gradient(#b4b8c2 0 2px, #fff 2px 3px, transparent 3px 4px) center / 3px 100% no-repeat;
}
.small .sep {
    width: 6px;
    height: 14px;
    background: linear-gradient(#8d9096, #8d9096) center / 1px 100% no-repeat;
}
.small .sep.blank {
    background: none;
}
.group-end {
    flex: none;
    width: 2px;
    height: 22px;
    margin: 0 1px 0 2px;
    border-right: 1px solid #f5f6fa;
    background-color: #c9cedb;
}
.small .overflow {
    width: 11px;
    margin-left: auto;
    align-items: flex-end;
    padding-bottom: 3px;
    background: linear-gradient(#f2f2f2, #b9b9b9);
}
.overflow::after {
    content: "";
    border: 3px solid transparent;
    border-top-color: #000;
    border-bottom: none;
    box-shadow: 0 -3px 0 -1px #000;
}

/* workspace */
.workspace {
    flex: 1;
    min-height: 0;
    display: grid;
    grid-template-columns: 292px 1fr;
    gap: 4px;
    padding-left: 2px;
}
.left, .right {
    min-width: 0;
    min-height: 0;
    display: flex;
    flex-direction: column;
    gap: 5px;
}
.left {
    padding-bottom: 6px;
}
.right {
    padding-bottom: 2px;
}
.panel {
    min-height: 0;
    display: flex;
    flex-direction: column;
    border: 1px solid #bcc5d4;
    background-color: #d6dbe9;
}
.explorer {
    flex: 257 1 0;
}
.properties {
    flex: 419 1 0;
}
.panel-head {
    flex: none;
    height: 26px;
    display: flex;
    align-items: center;
    padding: 0 7px 0 8px;
    border-bottom: 1px solid #bcc5d4;
}
.panel-head h2 {
    flex: 1;
}
.panel-head button {
    width: 16px;
    height: 16px;
}
.panel-head button + button {
    margin-left: 16px;
}
h2, h3, .doc-tab {
    font-size: 11px;
    font-weight: 600;
}

/* project tree */
.explorer {
    background-color: #dadeea;
}
.explorer .panel-head {
    background-color: #d6dbe9;
}
.tree {
    list-style: none;
    background-color: #d6dbe9;
    color: #666;
}
.tree li {
    height: 18px;
    display: flex;
    align-items: center;
    gap: 5px;
    padding-left: 41px;
}
.tree .root {
    padding-left: 11px;
    gap: 4px;
}
.tree .selected {
    background-color: #bcc2d5;
}
.caret {
    border: 4px solid;
    border-color: transparent #222 #222 transparent;
}

/* properties */
.object-box {
    flex: none;
    height: 22px;
    display: flex;
    align-items: center;
    margin-top: 4px;
    padding: 0 5px;
    border: 1px solid #b5c2c8;
    background-color: #fff;
    color: #444;
}
.object-box input {
    flex: 1;
    min-width: 0;
}
.right-arrow {
    margin-left: 8px;
    border: 3px solid transparent;
    border-left-color: #6a6c70;
    border-right: none;
}
.prop-tabs {
    flex: none;
    height: 30px;
    display: flex;
    align-items: center;
    margin: 0 10px 0 2px;
    border-bottom: 1px solid #c3cad8;
}
.prop-tabs > button {
    width: 40px;
    height: 30px;
    display: flex;
    align-items: center;
    justify-content: center;
}
.prop-tabs .active {
    border-bottom: 2px solid #4f6c8d;
}
.prop-search {
    width: 106px;
    height: 20px;
    display: flex;
    align-items: center;
    margin-left: auto;
    padding-left: 5px;
    border: 1px solid #b5c2c8;
    background-color: #fff;
}
.prop-search input {
    flex: 1;
    min-width: 0;
    font-size: 11px;
}
.prop-search input::placeholder {
    color: #8b99ad;
    opacity: 1;
}
.prop-list {
    padding-top: 9px;
}
.prop-list h3 {
    height: 18px;
    display: flex;
    align-items: center;
    gap: 5px;
    padding-left: 15px;
}
.prop-list h3::before {
    content: "";
    border: 3px solid transparent;
    border-top-color: #55585e;
    border-bottom: none;
}
.prop {
    height: 24px;
    display: flex;
    align-items: center;
    padding-left: 47px;
}
.prop label {
    width: 72px;
    font-size: 11px;
    white-space: nowrap;
}
.field {
    width: 133px;
    height: 20px;
    display: flex;
    align-items: center;
    padding: 0 4px 0 5px;
    border: 1px solid #b5c2c8;
    background-color: #fff;
    color: #444;
}
.field input {
    flex: 1;
    min-width: 0;
}
.field button {
    width: 8px;
    height: 2px;
    background: repeating-linear-gradient(90deg, #85878c 0 2px, transparent 2px 3px);
}
.prop::after {
    content: "";
    width: 4px;
    height: 4px;
    margin-left: 16px;
    border-radius: 50%;
    background-color: #8e919b;
}
.prop.set::after {
    width: 6px;
    height: 6px;
    margin-left: 15px;
    background-color: #4a6b90;
}
.readonly .field {
    color: #8b99ad;
}
.readonly::after {
    background-color: #b9bfce;
}
.prop-help {
    flex: none;
    height: 74px;
    margin: auto 10px 0;
    border-top: 1px solid #bcc5d4;
}

/* document editor */
.editor {
    flex: 444 1 0;
    min-height: 0;
    display: flex;
    flex-direction: column;
    margin-right: 3px;
}
.doc-tabs {
    flex: none;
    height: 27px;
    display: flex;
    padding-left: 11px;
}
.doc-tab {
    width: 158px;
    display: flex;
    align-items: center;
    padding: 0 8px;
    border: 1px solid #bcc5d4;
    border-bottom: none;
    background-color: #d6dbe9;
}
.doc-tab.active {
    width: 182px;
    border-color: #f5cc84;
    background-color: #f5cc84;
}
.doc-tab .icon:first-of-type {
    margin-left: auto;
}
.doc-tab .icon + .icon {
    margin-left: 6px;
    margin-right: -2px;
}
.doc-tabs .drop {
    width: 14px;
    margin-left: auto;
    margin-right: 9px;
    display: flex;
    align-items: center;
    justify-content: center;
}
.canvas-frame {
    flex: 1;
    min-height: 0;
    display: flex;
    flex-direction: column;
    border: 1px solid #bcc5d4;
}
.canvas {
    flex: 1;
    min-height: 0;
    display: grid;
    grid-template-columns: 18px 1fr 15px;
    grid-template-rows: 18px 1fr 16px;
    background-color: #fff;
}
.corner {
    background-color: #f0f0f0;
}
.ruler-x {
    grid-column: 2 / 4;
    width: 100%;
    height: 18px;
    border: 1px solid #7f7f7f;
}
.ruler-y {
    grid-row: 2 / 4;
    width: 18px;
    height: 100%;
    border: 1px solid #7f7f7f;
}
.ruler-x path, .ruler-y path {
    stroke: #7f7f7f;
}
.ruler-x text, .ruler-y text {
    font-family: "Liberation Sans", sans-serif;
    font-size: 9px;
    font-weight: 700;
    fill: #000;
}
.vscroll, .hscroll {
    display: flex;
    background-color: #f0f0f0;
}
.vscroll {
    flex-direction: column;
}
.vscroll .thumb {
    flex: 0 0 29%;
    margin-bottom: auto;
    background-color: #cdcdcd;
}
.hscroll .thumb {
    flex: 0 0 64%;
    margin-right: auto;
    background-color: #cdcdcd;
}
.arrow {
    flex: none;
    width: 16px;
    height: 16px;
    fill: none;
    stroke: #55585e;
    stroke-width: 2;
}

/* bottom docks */
.bottom {
    flex: 236 1 0;
    min-height: 0;
    display: grid;
    grid-template-columns: 354px 1fr;
    gap: 5px;
}
.bottom .panel {
    min-width: 0;
    overflow: hidden;
}
.bottom .output {
    border-right: none;
}
.bottom .panel-head {
    padding-right: 6px;
}
.param-body {
    flex: 1;
    min-height: 0;
    display: flex;
    gap: 2px;
    padding: 2px 0 1px 2px;
}
.param-left {
    flex: 1;
    min-width: 0;
    display: flex;
    flex-direction: column;
}
.dollar {
    flex: none;
    width: 30px;
    height: 27px;
    margin-left: 9px;
    border: 1px solid #b5c2c8;
    border-bottom: none;
    font-size: 11px;
}
.grid-box {
    flex: 1;
    min-height: 0;
    overflow: hidden;
    border: 1px solid #6e7073;
    border-right-color: #fff;
    border-bottom-color: #fff;
    background-color: #fff;
}
table {
    width: 100%;
    height: 100%;
    table-layout: fixed;
    border-collapse: collapse;
    font-size: 11px;
    color: #000;
}
th, td {
    height: 20px;
    padding: 0 4px;
    border-bottom: 1px solid #dedede;
    border-right: 1px solid #dedede;
    font-weight: 400;
    text-align: left;
    line-height: 18px;
    white-space: nowrap;
    overflow: hidden;
}
th:first-child {
    width: 150px;
    padding-left: 2px;
}
th:last-child {
    padding-left: 2px;
}
td:first-child {
    padding-left: 0;
}
th:last-child, td:last-child {
    border-right: none;
    padding-right: 0;
}
.filler td {
    height: auto;
}
.cell {
    display: flex;
    align-items: center;
}
.expand {
    width: 19px;
    height: 18px;
    margin-right: 8px;
    background: #000;
    clip-path: polygon(9px 4px, 15px 9px, 15px 10px, 9px 15px, 9px 13px, 10px 13px, 14px 10px, 14px 9px, 10px 6px, 10px 13px, 9px 13px);
}
.expand.none {
    clip-path: none;
    background: none;
    border-right: 1px solid #dedede;
}
.gem {
    width: 12px;
    height: 12px;
    margin-right: 7px;
}
.side-tools {
    flex: none;
    width: 31px;
    margin-bottom: 11px;
    padding: 4px 2px;
    border-radius: 3px;
    border-bottom: 1px solid #f2f4f8;
    background-color: #dde1ec;
}
.side-tools button {
    display: flex;
    align-items: center;
    width: 100%;
    height: 30px;
    padding-left: 4px;
}
.side-tools .tight {
    height: 20px;
    align-items: flex-start;
}
.side-tools .with-drop {
    height: 28px;
    padding-left: 0;
    gap: 5px;
}
.with-drop::after {
    content: "";
    border: 3px solid transparent;
    border-top-color: #000;
    border-bottom: none;
}
.side-tools hr {
    border: none;
    border-top: 1px solid #b4b8c2;
}
.grip-h {
    display: block;
    width: 24px;
    height: 2px;
    margin: 0 auto;
    background: repeating-linear-gradient(90deg, #b4b8c2 0 2px, #fff 2px 3px);
}
.dock-tabs {
    flex: none;
    height: 31px;
    display: flex;
    border-top: 1px solid #bcc5d4;
    font-size: 11px;
}
.dock-tabs button {
    flex: none;
    display: flex;
    align-items: center;
    gap: 4px;
    padding: 0 8px 0 9px;
}
.dock-tabs .active {
    margin-top: -1px;
    border-top: 2px solid #4f6c8d;
}

/* output */
.output-tools {
    flex: none;
    height: 26px;
    display: flex;
    align-items: center;
    border-bottom: 1px solid #c3cad8;
    background-color: #dde1ec;
}
.output-tools .grip {
    width: 9px;
    height: 14px;
}
.output-tools select {
    flex: none;
    width: 201px;
    height: 23px;
    padding-left: 5px;
    appearance: none;
    background: #fff conic-gradient(from -45deg at 50% 100%, #000 90deg, transparent 0) right 3px center / 6px 3px no-repeat;
    color: #000;
}
.output-tools .sep {
    width: 8px;
    height: 14px;
    background: linear-gradient(#8d9096, #8d9096) center / 1px 100% no-repeat;
}
.output-tools button {
    flex: none;
    width: 14px;
    height: 14px;
    margin-left: 4px;
    border: 1px solid #77797e;
}
.log {
    flex: 1;
    min-height: 0;
    overflow: hidden;
    padding: 1px 0 0 6px;
    font-family: "Liberation Mono", monospace;
    font-size: 12px;
    line-height: 14px;
    color: #4c4e53;
}
.log-scroll {
    flex: none;
    height: 17px;
    display: flex;
    align-items: center;
    padding-left: 12px;
}
.left-arrow {
    border: 4px solid transparent;
    border-right: 5px solid #333;
    border-left: none;
}
.log-scroll .thumb {
    width: 60px;
    height: 100%;
    margin-left: 6px;
    background-color: #bcc2d5;
}

/* status bar */
.statusbar {
    flex: none;
    height: 25px;
    display: flex;
    background-color: #34495e;
    color: #fff;
    line-height: 25px;
}
.statusbar span {
    padding: 0 3px 0 7px;
    border-right: 1px solid #4f6c8d;
}
```

FILE: script.js
```js
// rulers in millimetres, a tick every 2mm
const PX_PER_MM = 96 / 25.4;

function drawRuler(svg, vertical) {
    const length = vertical ? svg.clientHeight : svg.clientWidth;
    // vertical labels sit before their tick, so one may show when its tick does not
    const end = vertical ? length + 12 : length - 12;
    let ticks = "";
    let labels = "";
    for (let mm = 0; mm * PX_PER_MM < length + 12; mm += 2) {
        const pos = Math.round(mm * PX_PER_MM) - 0.5;
        const from = mm % 10 === 0 ? 0 : 10;
        if (mm > 0) {
            ticks += vertical ? `M${from} ${pos}H17` : `M${pos} ${from}V17`;
        }
        if (mm % 10 === 0 && pos < end) {
            if (!vertical) {
                labels += `<text x="${pos + 2}" y="7">${mm}</text>`;
            } else if (mm > 0) {
                labels += `<text transform="translate(8 ${pos - 2}) rotate(-90)">${mm}</text>`;
            }
        }
    }
    svg.innerHTML = `<path d="${ticks}"/>${labels}`;
}

drawRuler(document.getElementById("rulerX"), false);
drawRuler(document.getElementById("rulerY"), true);
```
